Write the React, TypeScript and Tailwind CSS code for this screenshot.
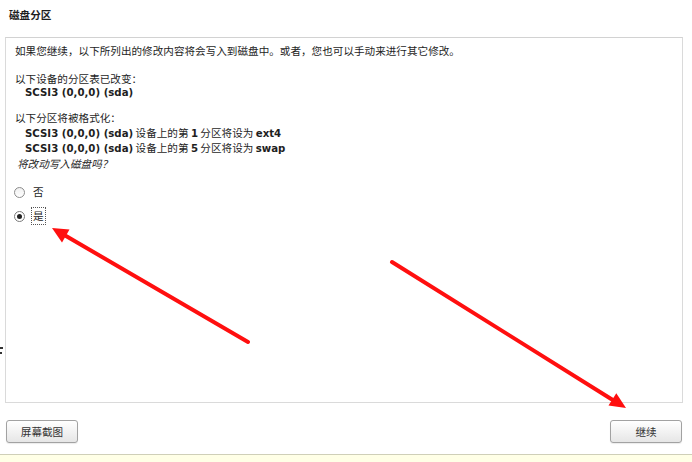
export default function App() {
  const font = "font-['Noto_Sans_CJK_SC','DejaVu_Sans',sans-serif]";
  const lat = "font-bold text-[10.2px] leading-none font-['DejaVu_Sans',sans-serif]";
  const row = "h-[15px] whitespace-nowrap";

  return (
    <div className={`relative w-[692px] h-[462px] bg-white overflow-hidden flex flex-col text-[10.6px] leading-[15px] text-[#1e1e1e] ${font}`}>
      {/* Title */}
      <div className="h-[37px] pl-[9px] pt-[7px] font-bold">磁盘分区</div>

      {/* Main panel */}
      <div className="ml-[5px] w-[678px] h-[366px] border border-[#dadada] border-t-[#d2d2d2] pl-[9px] pt-[5px]">
        <p className={row}>如果您继续，以下所列出的修改内容将会写入到磁盘中。或者，您也可以手动来进行其它修改。</p>

        <div className="mt-[13px]">
          <p className={row}>以下设备的分区表已改变：</p>
          <p className={`${row} pl-[10px] -mt-[2px]`}>
            <span className={lat}>SCSI3 (0,0,0) (sda)</span>
          </p>
        </div>

        <div className="mt-[11px]">
          <p className={row}>以下分区将被格式化：</p>
          <p className={`${row} pl-[10px]`}>
            <span className={lat}>SCSI3 (0,0,0) (sda)</span> 设备上的第 <span className={lat}>1</span> 分区将设为{" "}
            <span className={lat}>ext4</span>
          </p>
          <p className={`${row} pl-[10px]`}>
            <span className={lat}>SCSI3 (0,0,0) (sda)</span> 设备上的第 <span className={lat}>5</span> 分区将设为{" "}
            <span className={lat}>swap</span>
          </p>
          <p className={`${row} pl-[2px] mt-[1px] italic`}>将改动写入磁盘吗？</p>
        </div>

        <div className="mt-[13px] -ml-[1px] flex flex-col gap-[8px]">
          <label className="flex items-center h-[16px] gap-[6px]">
            <span className="w-[11px] h-[11px] rounded-full border border-[#8c8c8c] bg-gradient-to-b from-[#f0f0f0] to-white" />
            <span className="px-[1px] leading-[16px] border border-transparent">否</span>
          </label>
          <label className="flex items-center h-[16px] gap-[6px]">
            <span className="w-[11px] h-[11px] rounded-full border border-[#7a7a7a] bg-white flex items-center justify-center">
              <span className="w-[5px] h-[5px] rounded-full bg-[#222]" />
            </span>
            <span className="px-[1px] leading-[16px] border border-dotted border-[#555]">是</span>
          </label>
        </div>
      </div>

      {/* Buttons */}
      <div className="mt-[17px] pl-[6px] pr-[10px] flex justify-between">
        <button className="w-[72px] h-[23px] rounded-[3px] border border-[#a2a2a2] bg-gradient-to-b from-white to-[#e6e6e6] text-[#333] text-[10.6px] shadow-[0_1px_1px_rgba(0,0,0,0.08)]">
          屏幕截图
        </button>
        <button className="w-[72px] h-[23px] rounded-[3px] border border-[#a2a2a2] bg-gradient-to-b from-white to-[#e6e6e6] text-[#333] text-[10.6px] shadow-[0_1px_1px_rgba(0,0,0,0.08)]">
          继续
        </button>
      </div>

      {/* Bottom status strip */}
      <div className="mt-auto h-[8px] border-t border-[#cfcfb8] bg-[#ffffe6]" />

      {/* stray mark at left edge */}
      <span className="absolute left-0 top-[347px] w-[3px] h-[2px] bg-[#333]" />
      <span className="absolute left-0 top-[352px] w-[2px] h-[2px] bg-[#333]" />

      {/* Annotation arrows */}
      <svg className="absolute inset-0 pointer-events-none" width="692" height="462" viewBox="0 0 692 462">
        <line x1="248" y1="342" x2="66" y2="236" stroke="#ff0f0f" strokeWidth="4" strokeLinecap="round" />
        <polygon points="52,228 69.5,229.5 62,242.5" fill="#ff0f0f" />
        <line x1="392" y1="262" x2="612" y2="399.5" stroke="#ff0f0f" strokeWidth="4" strokeLinecap="round" />
        <polygon points="626,408 608.5,405.5 616.3,393.3" fill="#ff0f0f" />
      </svg>
    </div>
  );
}
